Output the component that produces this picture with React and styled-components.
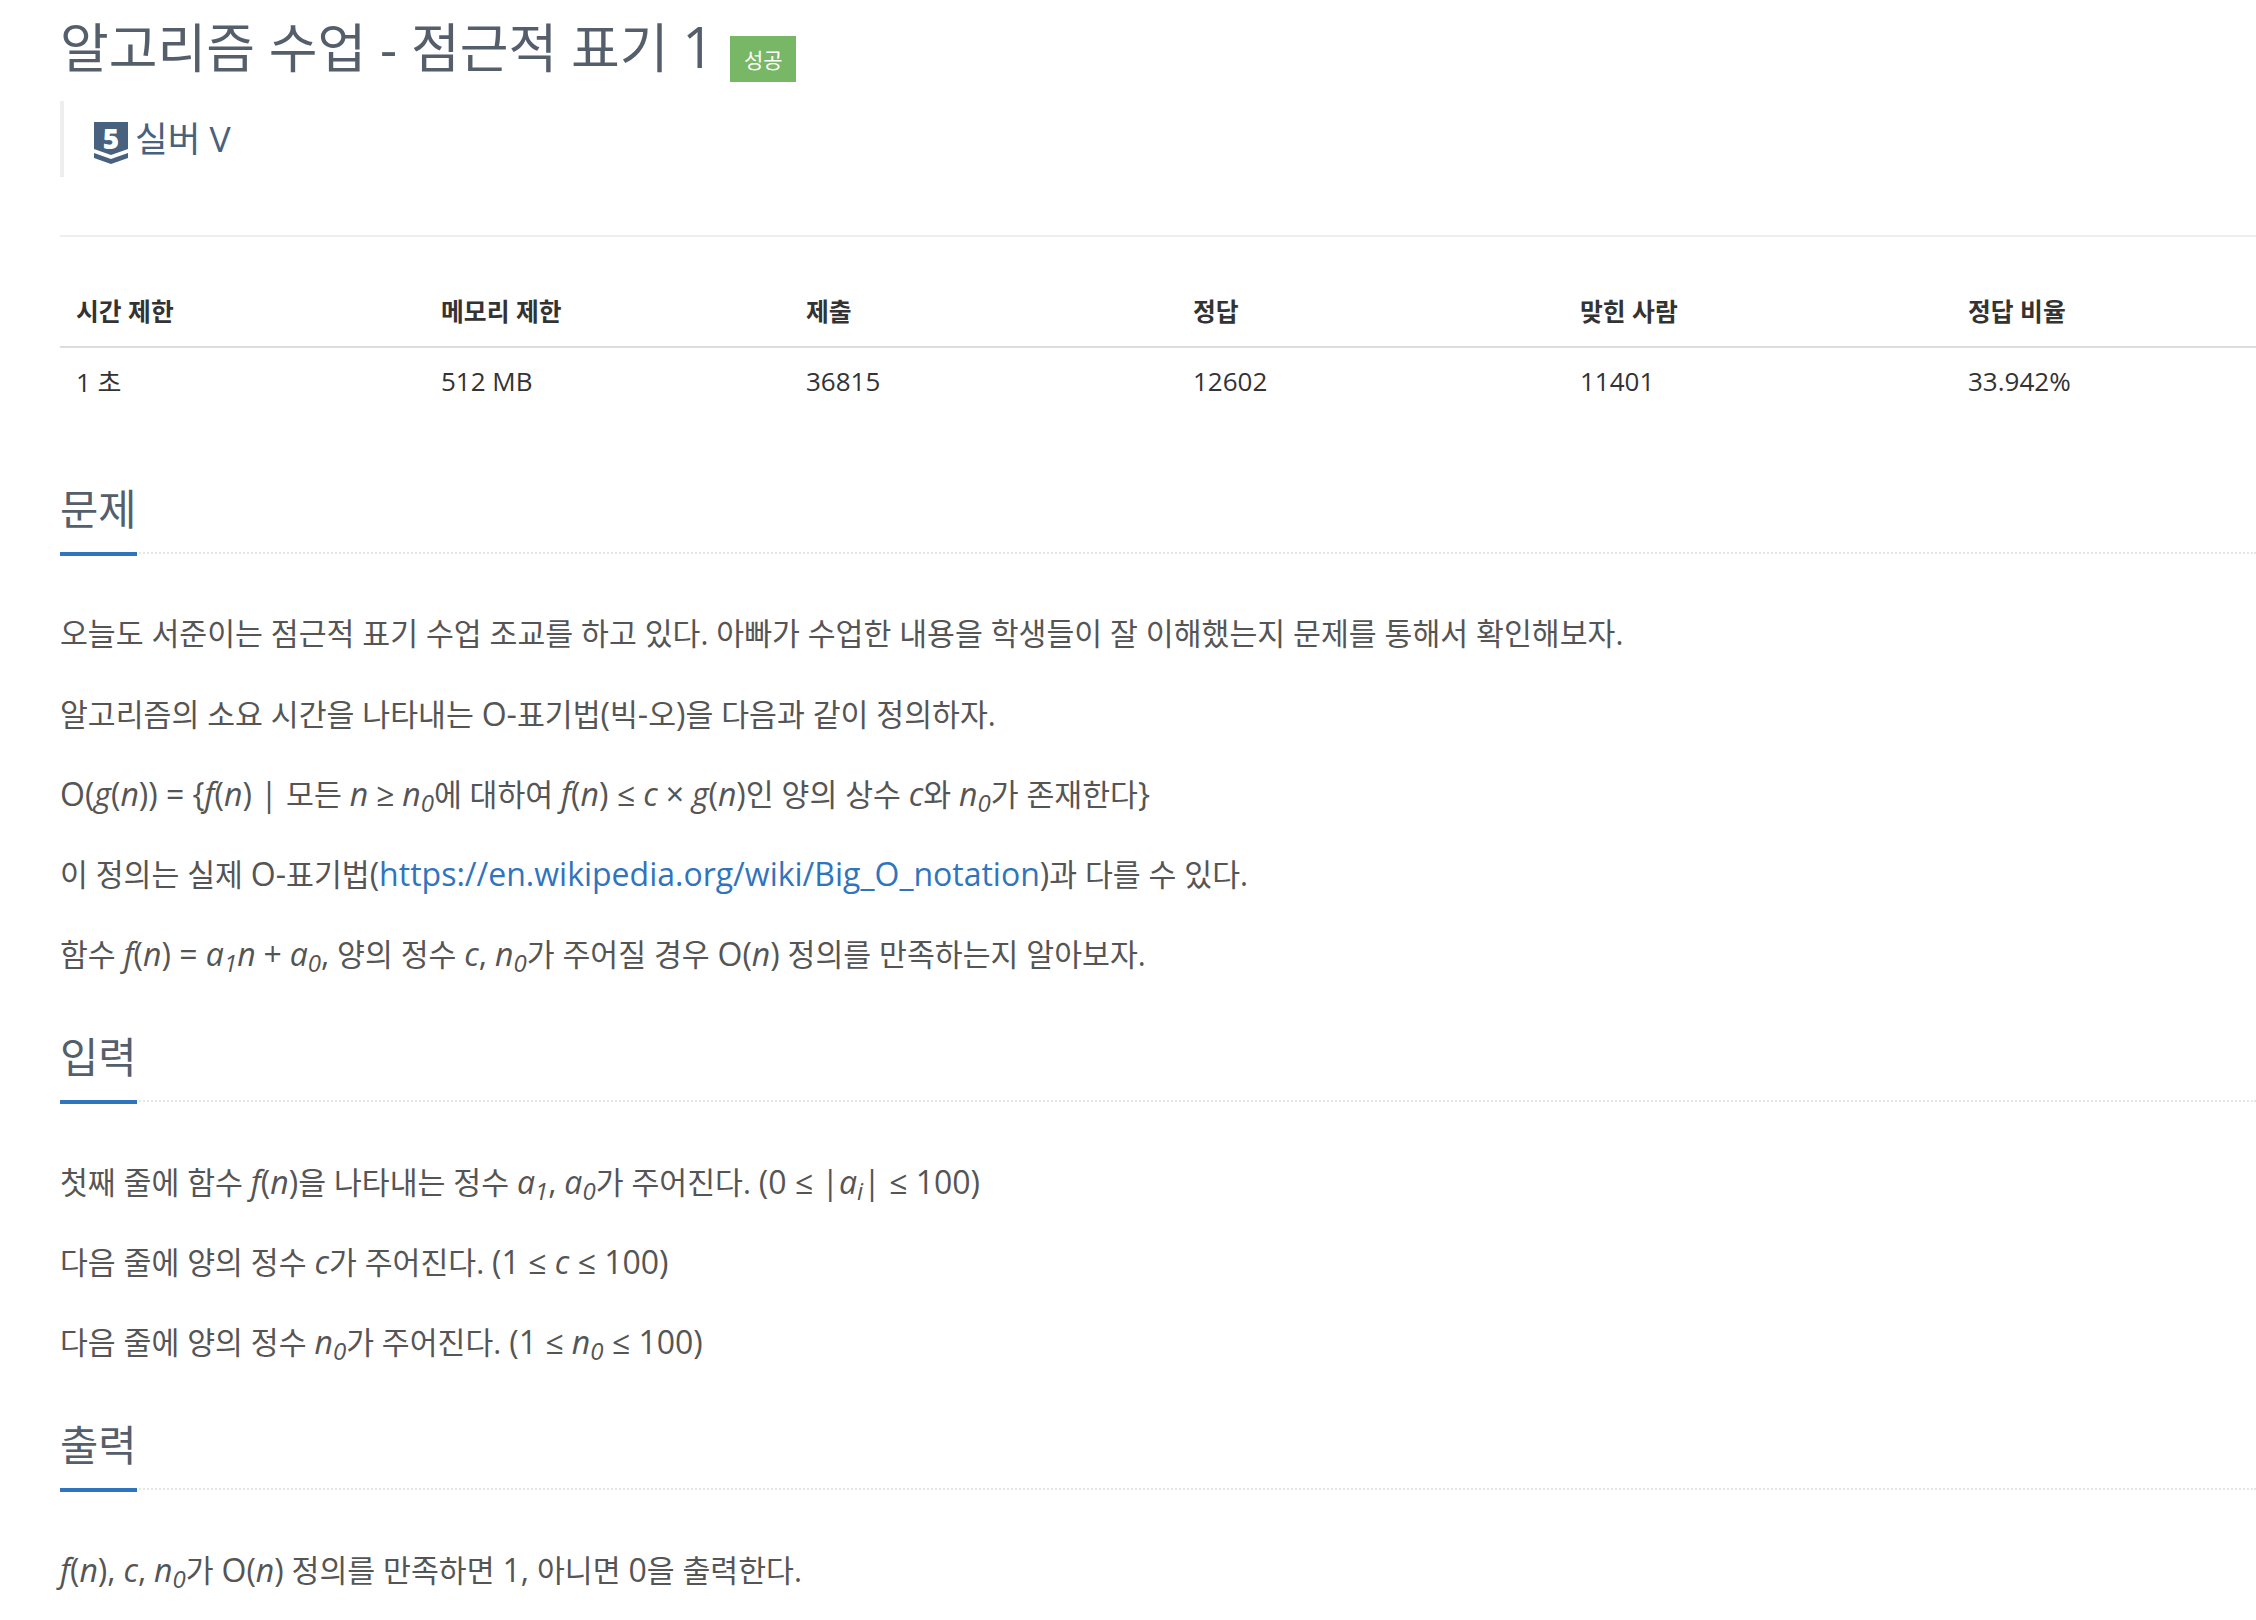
import styled, { createGlobalStyle } from 'styled-components'

const GlobalStyle = createGlobalStyle`
  html, body {
    margin: 0;
    padding: 0;
    background: #fff;
    overflow-x: hidden;
  }
  body {
    font-family: "Open Sans", "Noto Sans CJK KR", sans-serif;
    font-size: 30.3px;
    color: #555;
  }
`

const Page = styled.div`
  width: 2196px;
  height: 1620px;
  padding: 0 0 0 60px;
  overflow: hidden;
`

const TitleRow = styled.div`
  display: flex;
  align-items: flex-start;
  height: 101px;
`

const Title = styled.h1`
  margin: 11px 0 0;
  font-size: 53px;
  line-height: 70px;
  font-weight: 400;
  color: #555e6b;
`

const TitleNum = styled.span`
  font-size: 56px;
`

const Badge = styled.span`
  width: 66px;
  height: 46px;
  margin: 36px 0 0 16px;
  background: #78b766;
  color: #fff;
  font-size: 21px;
  display: flex;
  align-items: center;
  justify-content: center;
`

const Tier = styled.div`
  height: 76px;
  border-left: 4px solid #eee;
  padding-left: 30px;
  display: flex;
  align-items: flex-start;
  gap: 7px;
  font-size: 35.5px;
  line-height: 74px;
  color: #47617f;
`

const TierBadge = styled.span`
  position: relative;
  width: 34px;
  height: 42px;
  margin-top: 21px;
  flex: none;
`

const TierIcon = styled.svg`
  display: block;
  width: 34px;
  height: 42px;
`

const TierDigit = styled.span`
  position: absolute;
  left: 0;
  right: 0;
  top: 1px;
  text-align: center;
  font-size: 28px;
  line-height: 30px;
  font-weight: 800;
  color: #fff;
`

const Divider = styled.hr`
  border: 0;
  height: 2px;
  background: #eee;
  margin: 58px 0 0;
`

const StatsTable = styled.table`
  width: 2196px;
  table-layout: fixed;
  border-collapse: collapse;
  margin-top: 43px;
`

const HeadCell = styled.th`
  box-sizing: border-box;
  width: ${(p) => p.$w}px;
  padding: 0 16px 7px;
  height: 67px;
  text-align: left;
  font-size: 24.8px;
  font-weight: 700;
  color: #333;
  border-bottom: 2px solid #ddd;
`

const Cell = styled.td`
  box-sizing: border-box;
  padding: 0 16px 4px;
  height: 70px;
  font-size: 26px;
  color: #333;
`

const Section = styled.section`
  margin-top: ${(p) => p.$top}px;
`

const Heading = styled.div`
  border-bottom: 2px dotted #e6e6e6;
  height: 85px;
`

const HeadingText = styled.h2`
  display: inline-block;
  height: 85px;
  margin: 0;
  font-size: 41.6px;
  line-height: 84px;
  font-weight: 400;
  color: #555e6b;
  border-bottom: 4px solid #2f74bd;
`

const Para = styled.p`
  margin: 0;
  height: 80px;
  line-height: 78px;
  white-space: nowrap;
`

const Body = styled.div`
  padding-top: 41px;
`

const Link = styled.a`
  color: #2f74bd;
  text-decoration: none;
`

/* latin runs sit a little larger than the hangul around them */
const L = styled.span`
  font-size: 32px;
`

const M = styled.i`
  font-size: 32px;
`

const Sub = styled.sub`
  font-size: 75%;
  line-height: 0;
  position: relative;
  bottom: -0.25em;
  vertical-align: baseline;
`

const N0 = () => <M>n<Sub>0</Sub></M>
const A0 = () => <M>a<Sub>0</Sub></M>
const A1 = () => <M>a<Sub>1</Sub></M>

const columns = [
  { head: '시간 제한', value: '1 초', w: 365 },
  { head: '메모리 제한', value: '512 MB', w: 365 },
  { head: '제출', value: '36815', w: 387 },
  { head: '정답', value: '12602', w: 387 },
  { head: '맞힌 사람', value: '11401', w: 388 },
  { head: '정답 비율', value: '33.942%', w: 304 },
]

const App = () => (
  <Page>
    <GlobalStyle />
    <TitleRow>
      <Title>알고리즘 수업 - 점근적 표기 <TitleNum>1</TitleNum></Title>
      <Badge>성공</Badge>
    </TitleRow>
    <Tier>
      <TierBadge>
        <TierIcon viewBox="0 0 34 42">
          <path d="M0 0H34V27L17 33L0 27Z" fill="#47617f" />
          <path d="M0 31L17 37L34 31V36L17 42L0 36Z" fill="#47617f" />
        </TierIcon>
        <TierDigit>5</TierDigit>
      </TierBadge>
      실버 V
    </Tier>
    <Divider />
    <StatsTable>
      <thead>
        <tr>{columns.map((c) => <HeadCell key={c.head} $w={c.w}>{c.head}</HeadCell>)}</tr>
      </thead>
      <tbody>
        <tr>{columns.map((c) => <Cell key={c.head}>{c.value}</Cell>)}</tr>
      </tbody>
    </StatsTable>

    <Section $top={50}>
      <Heading><HeadingText>문제</HeadingText></Heading>
      <Body>
        <Para>오늘도 서준이는 점근적 표기 수업 조교를 하고 있다. 아빠가 수업한 내용을 학생들이 잘 이해했는지 문제를 통해서 확인해보자.</Para>
        <Para>알고리즘의 소요 시간을 나타내는 <L>O-</L>표기법<L>(</L>빅<L>-</L>오<L>)</L>을 다음과 같이 정의하자.</Para>
        <Para><L>O(</L><M>g</M><L>(</L><M>n</M><L>)) = {'{'}</L><M>f</M><L>(</L><M>n</M><L>) | </L>모든 <M>n</M> <L>≥</L> <N0 />에 대하여 <M>f</M><L>(</L><M>n</M><L>) ≤ </L><M>c</M> <L>×</L> <M>g</M><L>(</L><M>n</M><L>)</L>인 양의 상수 <M>c</M>와 <N0 />가 존재한다<L>{'}'}</L></Para>
        <Para>이 정의는 실제 <L>O-</L>표기법<L>(</L><Link href="#"><L>https://en.wikipedia.org/wiki/Big_O_notation</L></Link><L>)</L>과 다를 수 있다.</Para>
        <Para>함수 <M>f</M><L>(</L><M>n</M><L>) = </L><A1 /><M>n</M> <L>+</L> <A0 /><L>,</L> 양의 정수 <M>c</M><L>,</L> <N0 />가 주어질 경우 <L>O(</L><M>n</M><L>)</L> 정의를 만족하는지 알아보자.</Para>
      </Body>
    </Section>

    <Section $top={20}>
      <Heading><HeadingText>입력</HeadingText></Heading>
      <Body>
        <Para>첫째 줄에 함수 <M>f</M><L>(</L><M>n</M><L>)</L>을 나타내는 정수 <A1 /><L>,</L> <A0 />가 주어진다. <L>(0 ≤ |</L><M>a<Sub>i</Sub></M><L>| ≤ 100)</L></Para>
        <Para>다음 줄에 양의 정수 <M>c</M>가 주어진다. <L>(1 ≤ </L><M>c</M><L> ≤ 100)</L></Para>
        <Para>다음 줄에 양의 정수 <N0 />가 주어진다. <L>(1 ≤ </L><N0 /><L> ≤ 100)</L></Para>
      </Body>
    </Section>

    <Section $top={20}>
      <Heading><HeadingText>출력</HeadingText></Heading>
      <Body>
        <Para><M>f</M><L>(</L><M>n</M><L>),</L> <M>c</M><L>,</L> <N0 />가 <L>O(</L><M>n</M><L>)</L> 정의를 만족하면 <L>1,</L> 아니면 <L>0</L>을 출력한다.</Para>
      </Body>
    </Section>
  </Page>
)

export default App
